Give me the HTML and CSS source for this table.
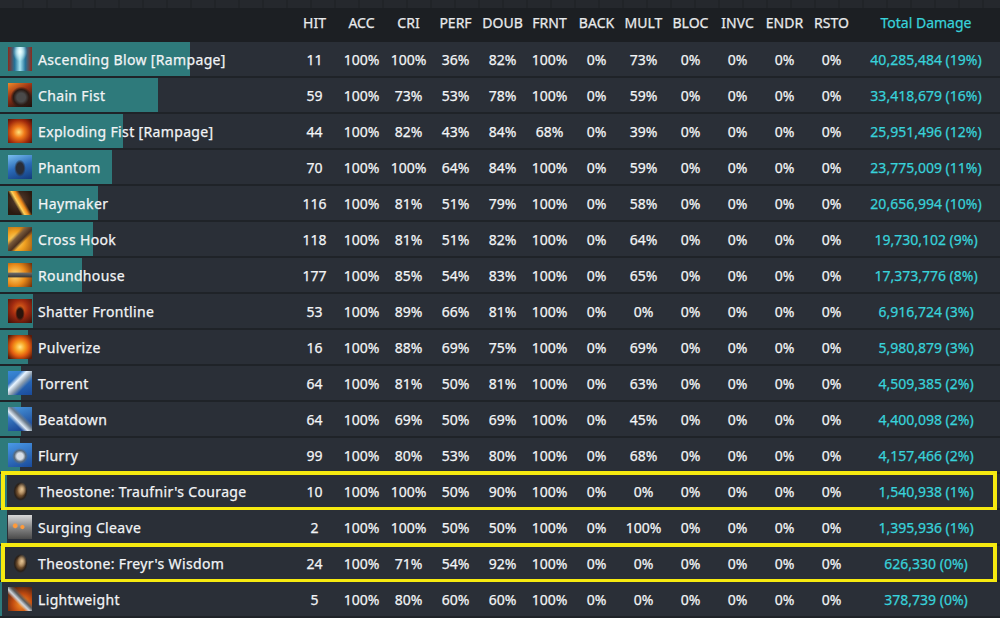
FILE: index.html
```html
<!DOCTYPE html>
<html>
<head>
<meta charset="utf-8">
<link rel="stylesheet" href="styles.css">
</head>
<body>
<div class="page">
  <div class="topstrip"></div>
  <div class="head">
    <div class="hname"></div>
    <div>HIT</div><div>ACC</div><div>CRI</div><div>PERF</div><div>DOUB</div><div>FRNT</div><div>BACK</div><div>MULT</div><div>BLOC</div><div>INVC</div><div>ENDR</div><div>RSTO</div>
    <div class="tot">Total Damage</div>
  </div>

  <div class="row" style="--w:190px"><div class="name"><span class="ic i-asc"></span>Ascending Blow [Rampage]</div><div>11</div><div>100%</div><div>100%</div><div>36%</div><div>82%</div><div>100%</div><div>0%</div><div>73%</div><div>0%</div><div>0%</div><div>0%</div><div>0%</div><div class="tot">40,285,484 (19%)</div></div>
  <div class="row" style="--w:158px"><div class="name"><span class="ic i-chain"></span>Chain Fist</div><div>59</div><div>100%</div><div>73%</div><div>53%</div><div>78%</div><div>100%</div><div>0%</div><div>59%</div><div>0%</div><div>0%</div><div>0%</div><div>0%</div><div class="tot">33,418,679 (16%)</div></div>
  <div class="row" style="--w:123px"><div class="name"><span class="ic i-expl"></span>Exploding Fist [Rampage]</div><div>44</div><div>100%</div><div>82%</div><div>43%</div><div>84%</div><div>68%</div><div>0%</div><div>39%</div><div>0%</div><div>0%</div><div>0%</div><div>0%</div><div class="tot">25,951,496 (12%)</div></div>
  <div class="row" style="--w:112px"><div class="name"><span class="ic i-phan"></span>Phantom</div><div>70</div><div>100%</div><div>100%</div><div>64%</div><div>84%</div><div>100%</div><div>0%</div><div>59%</div><div>0%</div><div>0%</div><div>0%</div><div>0%</div><div class="tot">23,775,009 (11%)</div></div>
  <div class="row" style="--w:98px"><div class="name"><span class="ic i-hay"></span>Haymaker</div><div>116</div><div>100%</div><div>81%</div><div>51%</div><div>79%</div><div>100%</div><div>0%</div><div>58%</div><div>0%</div><div>0%</div><div>0%</div><div>0%</div><div class="tot">20,656,994 (10%)</div></div>
  <div class="row" style="--w:93px"><div class="name"><span class="ic i-cross"></span>Cross Hook</div><div>118</div><div>100%</div><div>81%</div><div>51%</div><div>82%</div><div>100%</div><div>0%</div><div>64%</div><div>0%</div><div>0%</div><div>0%</div><div>0%</div><div class="tot">19,730,102 (9%)</div></div>
  <div class="row" style="--w:82px"><div class="name"><span class="ic i-round"></span>Roundhouse</div><div>177</div><div>100%</div><div>85%</div><div>54%</div><div>83%</div><div>100%</div><div>0%</div><div>65%</div><div>0%</div><div>0%</div><div>0%</div><div>0%</div><div class="tot">17,373,776 (8%)</div></div>
  <div class="row" style="--w:33px"><div class="name"><span class="ic i-shat"></span>Shatter Frontline</div><div>53</div><div>100%</div><div>89%</div><div>66%</div><div>81%</div><div>100%</div><div>0%</div><div>0%</div><div>0%</div><div>0%</div><div>0%</div><div>0%</div><div class="tot">6,916,724 (3%)</div></div>
  <div class="row" style="--w:28px"><div class="name"><span class="ic i-pulv"></span>Pulverize</div><div>16</div><div>100%</div><div>88%</div><div>69%</div><div>75%</div><div>100%</div><div>0%</div><div>69%</div><div>0%</div><div>0%</div><div>0%</div><div>0%</div><div class="tot">5,980,879 (3%)</div></div>
  <div class="row" style="--w:21px"><div class="name"><span class="ic i-torr"></span>Torrent</div><div>64</div><div>100%</div><div>81%</div><div>50%</div><div>81%</div><div>100%</div><div>0%</div><div>63%</div><div>0%</div><div>0%</div><div>0%</div><div>0%</div><div class="tot">4,509,385 (2%)</div></div>
  <div class="row" style="--w:21px"><div class="name"><span class="ic i-beat"></span>Beatdown</div><div>64</div><div>100%</div><div>69%</div><div>50%</div><div>69%</div><div>100%</div><div>0%</div><div>45%</div><div>0%</div><div>0%</div><div>0%</div><div>0%</div><div class="tot">4,400,098 (2%)</div></div>
  <div class="row" style="--w:20px"><div class="name"><span class="ic i-flur"></span>Flurry</div><div>99</div><div>100%</div><div>80%</div><div>53%</div><div>80%</div><div>100%</div><div>0%</div><div>68%</div><div>0%</div><div>0%</div><div>0%</div><div>0%</div><div class="tot">4,157,466 (2%)</div></div>
  <div class="row hl" style="--w:7px"><div class="name"><span class="ic i-theo"></span>Theostone: Traufnir's Courage</div><div>10</div><div>100%</div><div>100%</div><div>50%</div><div>90%</div><div>100%</div><div>0%</div><div>0%</div><div>0%</div><div>0%</div><div>0%</div><div>0%</div><div class="tot">1,540,938 (1%)</div></div>
  <div class="row" style="--w:7px"><div class="name"><span class="ic i-surg"></span>Surging Cleave</div><div>2</div><div>100%</div><div>100%</div><div>50%</div><div>50%</div><div>100%</div><div>0%</div><div>100%</div><div>0%</div><div>0%</div><div>0%</div><div>0%</div><div class="tot">1,395,936 (1%)</div></div>
  <div class="row hl" style="--w:3px"><div class="name"><span class="ic i-theo"></span>Theostone: Freyr's Wisdom</div><div>24</div><div>100%</div><div>71%</div><div>54%</div><div>92%</div><div>100%</div><div>0%</div><div>0%</div><div>0%</div><div>0%</div><div>0%</div><div>0%</div><div class="tot">626,330 (0%)</div></div>
  <div class="row" style="--w:2px"><div class="name"><span class="ic i-light"></span>Lightweight</div><div>5</div><div>100%</div><div>80%</div><div>60%</div><div>60%</div><div>100%</div><div>0%</div><div>0%</div><div>0%</div><div>0%</div><div>0%</div><div>0%</div><div class="tot">378,739 (0%)</div></div>
</div>
</body>
</html>
```

FILE: styles.css
```css
html, body {
  margin: 0;
  padding: 0;
  background: #1f2328;
}
.page {
  width: 1000px;
  height: 618px;
  overflow: hidden;
  font-family: "Noto Sans", "Open Sans", sans-serif;
  font-size: 14px;
  color: #f2f4f6;
  background: #1f2328;
  -webkit-text-stroke: 0.25px currentColor;
}
.topstrip {
  height: 8px;
  background: repeating-linear-gradient(90deg, #25282d 0 22px, #212428 22px 24px);
}
.head {
  height: 28px;
  padding-bottom: 6px;
  display: grid;
  grid-template-columns: 291px repeat(12, 47px) 142px;
  align-items: center;
  background: #1c1f23;
  color: #e8eaec;
  text-align: center;
}
.head .tot {
  color: #38d2da;
}
.row {
  position: relative;
  height: 34px;
  margin-bottom: 2px;
  display: grid;
  grid-template-columns: 291px repeat(12, 47px) 142px;
  align-items: center;
  text-align: center;
  background: linear-gradient(90deg, #2e7a7b 0 var(--w), #2a2f37 var(--w) 100%);
}
.row .tot {
  color: #38d2da;
}
.name {
  display: flex;
  align-items: center;
  gap: 6px;
  padding-left: 8px;
  text-align: left;
  white-space: nowrap;
  letter-spacing: 0.35px;
}
.hl::after {
  content: "";
  position: absolute;
  left: 1px;
  width: 988px;
  top: -3px;
  bottom: -3px;
  border: 4px solid #f6ea10;
  pointer-events: none;
}
.ic {
  width: 24px;
  height: 24px;
  flex: none;
  display: block;
}
.i-asc {
  background:
    radial-gradient(ellipse 30% 40% at 50% 20%, #f0ffff 0, rgba(220,250,255,0.6) 50%, transparent 100%),
    linear-gradient(90deg, #8c2a1a 0, #23739a 28%, #a8e4f2 50%, #23739a 72%, #8c2a1a 100%);
}
.i-chain {
  background:
    radial-gradient(circle at 55% 60%, #4a4a4a 0 22%, #2a1a14 40%, transparent 55%),
    linear-gradient(150deg, #f08a2a 0, #9a3214 40%, #3a1a12 75%, #1c100c 100%);
}
.i-expl {
  background:
    radial-gradient(circle at 45% 55%, #ffe07a 0, #f07a1a 30%, #a02a0c 65%, #3a0c06 100%);
}
.i-phan {
  background:
    radial-gradient(ellipse 30% 45% at 50% 55%, #2a2e38 0 50%, transparent 80%),
    linear-gradient(160deg, #7ac0f0 0, #2a6ab8 50%, #123a7a 100%);
}
.i-hay {
  background:
    linear-gradient(60deg, transparent 35%, #ffd25a 45%, #f08a1a 55%, transparent 65%),
    radial-gradient(circle at 45% 40%, #5a4030 0, #2a1a10 70%);
}
.i-cross {
  background:
    linear-gradient(135deg, transparent 30%, #7a5a3a 40%, #4a3020 55%, transparent 65%),
    radial-gradient(circle at 30% 60%, #ffe27a 0, #f0a020 45%, #8a4a10 100%);
}
.i-round {
  background:
    linear-gradient(180deg, transparent 38%, #6a6a6a 42%, #3a3a3a 58%, transparent 62%),
    radial-gradient(circle at 30% 50%, #ffe07a 0, #e88a1a 50%, #6a2a0a 100%);
}
.i-shat {
  background:
    radial-gradient(ellipse 25% 40% at 50% 60%, #2a140c 0 50%, transparent 80%),
    radial-gradient(circle at 50% 40%, #e86a1a 0, #a02a10 45%, #3a0e08 100%);
}
.i-pulv {
  background:
    radial-gradient(circle at 50% 50%, #ffe88a 0, #f8a020 30%, #e05a10 55%, #5a1a0a 90%);
}
.i-torr {
  background:
    linear-gradient(135deg, transparent 28%, #e8f4ff 40%, #8a9aaa 55%, transparent 68%),
    linear-gradient(160deg, #3a8ad8 0, #1a4a9a 100%);
}
.i-beat {
  background:
    linear-gradient(45deg, transparent 30%, #dfeaf4 42%, #6a7a8a 55%, transparent 65%),
    linear-gradient(160deg, #4a9ae0 0, #143a8a 100%);
}
.i-flur {
  background:
    radial-gradient(circle at 50% 55%, #d8dee6 0 18%, #5a6a7a 32%, transparent 45%),
    linear-gradient(160deg, #4a9ae8 0, #1a4a9a 100%);
}
.i-theo {
  background:
    radial-gradient(ellipse 20% 28% at 58% 42%, #e8c898 0, transparent 100%),
    radial-gradient(ellipse 30% 40% at 52% 52%, #b08858 0, #6a4a2a 50%, #2a2018 80%, transparent 100%);
}
.i-surg {
  background:
    radial-gradient(circle at 30% 45%, #ff9a3a 0 8%, transparent 14%),
    radial-gradient(circle at 60% 50%, #ff9a3a 0 8%, transparent 14%),
    linear-gradient(180deg, #d8d8d8 0, #8a8a8a 50%, #4a4a4a 100%);
}
.i-light {
  background:
    linear-gradient(45deg, transparent 35%, #cfd6de 45%, #5a5a5a 55%, transparent 65%),
    radial-gradient(circle at 60% 70%, #ff9a2a 0, #c04a10 45%, #2a1410 100%);
}
```
